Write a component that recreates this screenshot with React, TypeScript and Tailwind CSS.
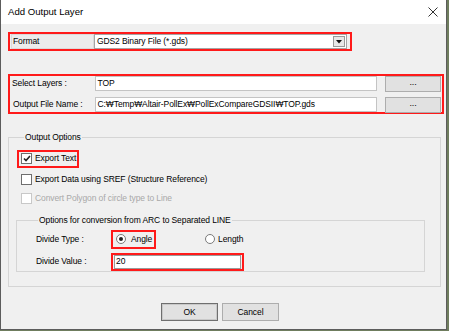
import React from "react";

const font = "font-['Liberation_Sans',Tahoma,Arial,sans-serif]";

const Check = ({ checked, disabled }: { checked?: boolean; disabled?: boolean }) => (
  <span
    className={`flex h-[11px] w-[11px] shrink-0 items-center justify-center border bg-white ${
      disabled ? "border-[#c8c8c8] bg-[#f4f4f4]" : "border-[#6e6e6e]"
    }`}
  >
    {checked && (
      <svg width="8" height="7" viewBox="0 0 8 7">
        <path d="M1 3.5 L3 5.5 L7 1" stroke="#222" strokeWidth="1.6" fill="none" />
      </svg>
    )}
  </span>
);

const Radio = ({ checked }: { checked?: boolean }) => (
  <span className="flex h-[10px] w-[10px] shrink-0 items-center justify-center rounded-full border border-[#7a7a7a] bg-white">
    {checked && <span className="h-[4px] w-[4px] rounded-full bg-[#222]" />}
  </span>
);

const Browse = () => (
  <button className="flex h-[16px] w-[56px] items-start justify-center border border-[#adadad] bg-[#e1e1e1] text-[9px] leading-[10px] text-black">
    ...
  </button>
);

export default function App() {
  return (
    <div className={`${font} h-[331px] w-[449px] whitespace-nowrap bg-[#6f7d5e] text-[8.5px] tracking-[-0.1px] text-black`}>
      <div className="flex h-[330px] w-[447px] flex-col border-b border-l border-r border-[#5c5c5c] bg-[#f0f0f0]">
        {/* title bar */}
        <div className="flex h-[24px] shrink-0 items-center justify-between bg-white pl-[7px] pr-[8px]">
          <span className="text-[9.6px] tracking-normal">Add Output Layer</span>
          <svg width="10" height="10" viewBox="0 0 10 10">
            <path d="M0.5 0.5 L9.5 9.5 M9.5 0.5 L0.5 9.5" stroke="#333" strokeWidth="1" />
          </svg>
        </div>

        <div className="flex flex-col px-[7px] pt-[8px]">
          {/* format */}
          <div className="flex h-[19px] w-[344px] items-center border-2 border-[#ff1a1a] pl-[1px] pr-[3px]">
            <div className="flex h-[15px] w-[83px] items-center border border-[#dadada] bg-[#ececec] pl-[1px]">
              Format
            </div>
            <div className="flex h-[15px] flex-1 items-center justify-between border border-[#a5a5a5] bg-white pl-[2px] pr-[1px]">
              <span>GDS2 Binary File (*.gds)</span>
              <span className="flex h-[11px] w-[12px] items-center justify-center border border-[#9a9a9a] bg-[#e8e8e8]">
                <svg width="6" height="4" viewBox="0 0 6 4">
                  <path d="M0 0 H6 L3 3.5 Z" fill="#111" />
                </svg>
              </span>
            </div>
          </div>

          {/* layers + file */}
          <div className="mt-[23px] flex h-[40px] w-[436px] flex-col justify-center gap-[5px] border-2 border-[#ff1a1a] pl-[1px] pr-[1px]">
            <div className="flex items-center">
              <span className="w-[84px] pl-[1px]">Select Layers :</span>
              <div className="flex h-[15px] w-[284px] items-center border border-[#c4c4c4] bg-white pl-[2px]">TOP</div>
              <div className="ml-[8px]">
                <Browse />
              </div>
            </div>
            <div className="flex items-center">
              <span className="w-[84px] pl-[2px]">Output File Name :</span>
              <div className="flex h-[15px] w-[284px] items-center border border-[#c4c4c4] bg-white pl-[2px]">
                C:₩Temp₩Altair-PollEx₩PollExCompareGDSII₩TOP.gds
              </div>
              <div className="ml-[8px]">
                <Browse />
              </div>
            </div>
          </div>

          {/* output options */}
          <fieldset className="mt-[17px] h-[156px] w-[433px] border border-[#d5d5d5] px-[8px] pt-[6px]">
            <legend className="ml-[7px] px-[1px]">Output Options</legend>
            <div className="flex flex-col">
              <div className="flex h-[18px] w-[62px] items-center gap-[3px] border-2 border-[#ff1a1a] pl-[2px]">
                <Check checked />
                <span>Export Text</span>
              </div>
              <div className="mt-[6px] flex h-[12px] items-center gap-[3px] pl-[4px]">
                <Check />
                <span>Export Data using SREF (Structure Reference)</span>
              </div>
              <div className="mt-[7px] flex h-[12px] items-center gap-[3px] pl-[4px] text-[#a8a8a8]">
                <Check disabled />
                <span>Convert Polygon of circle type to Line</span>
              </div>

              <fieldset className="mt-[9px] -ml-[1px] mr-[3px] h-[58px] w-[409px] self-start border border-[#d5d5d5] pl-[19px] pt-[3px]">
                <legend className="ml-[2px] px-[1px]">Options for conversion from ARC to Separated LINE</legend>
                <div className="flex h-[19px] items-center">
                  <span className="w-[75px]">Divide Type :</span>
                  <div className="flex h-[19px] w-[45px] items-center gap-[5px] border-2 border-[#ff1a1a] pl-[3px]">
                    <Radio checked />
                    <span>Angle</span>
                  </div>
                  <div className="ml-[49px] flex items-center gap-[3px]">
                    <Radio />
                    <span>Length</span>
                  </div>
                </div>
                <div className="mt-[4px] flex h-[18px] items-center">
                  <span className="w-[75px]">Divide Value :</span>
                  <div className="flex h-[18px] w-[133px] items-center border-2 border-[#ff1a1a] p-[1px]">
                    <div className="flex h-[14px] w-full items-center border border-[#9a9a9a] bg-white pl-[1px]">20</div>
                  </div>
                </div>
              </fieldset>
            </div>
          </fieldset>

          {/* buttons */}
          <div className="mt-[16px] flex justify-center gap-[4px] pr-[7px]">
            <button className="flex h-[18px] w-[57px] items-center justify-center border border-[#6f6f6f] bg-[#e1e1e1] shadow-[inset_0_0_0_1px_#c9c9c9]">
              OK
            </button>
            <button className="flex h-[18px] w-[57px] items-center justify-center border border-[#adadad] bg-[#e1e1e1]">
              Cancel
            </button>
          </div>
        </div>
      </div>
    </div>
  );
}
